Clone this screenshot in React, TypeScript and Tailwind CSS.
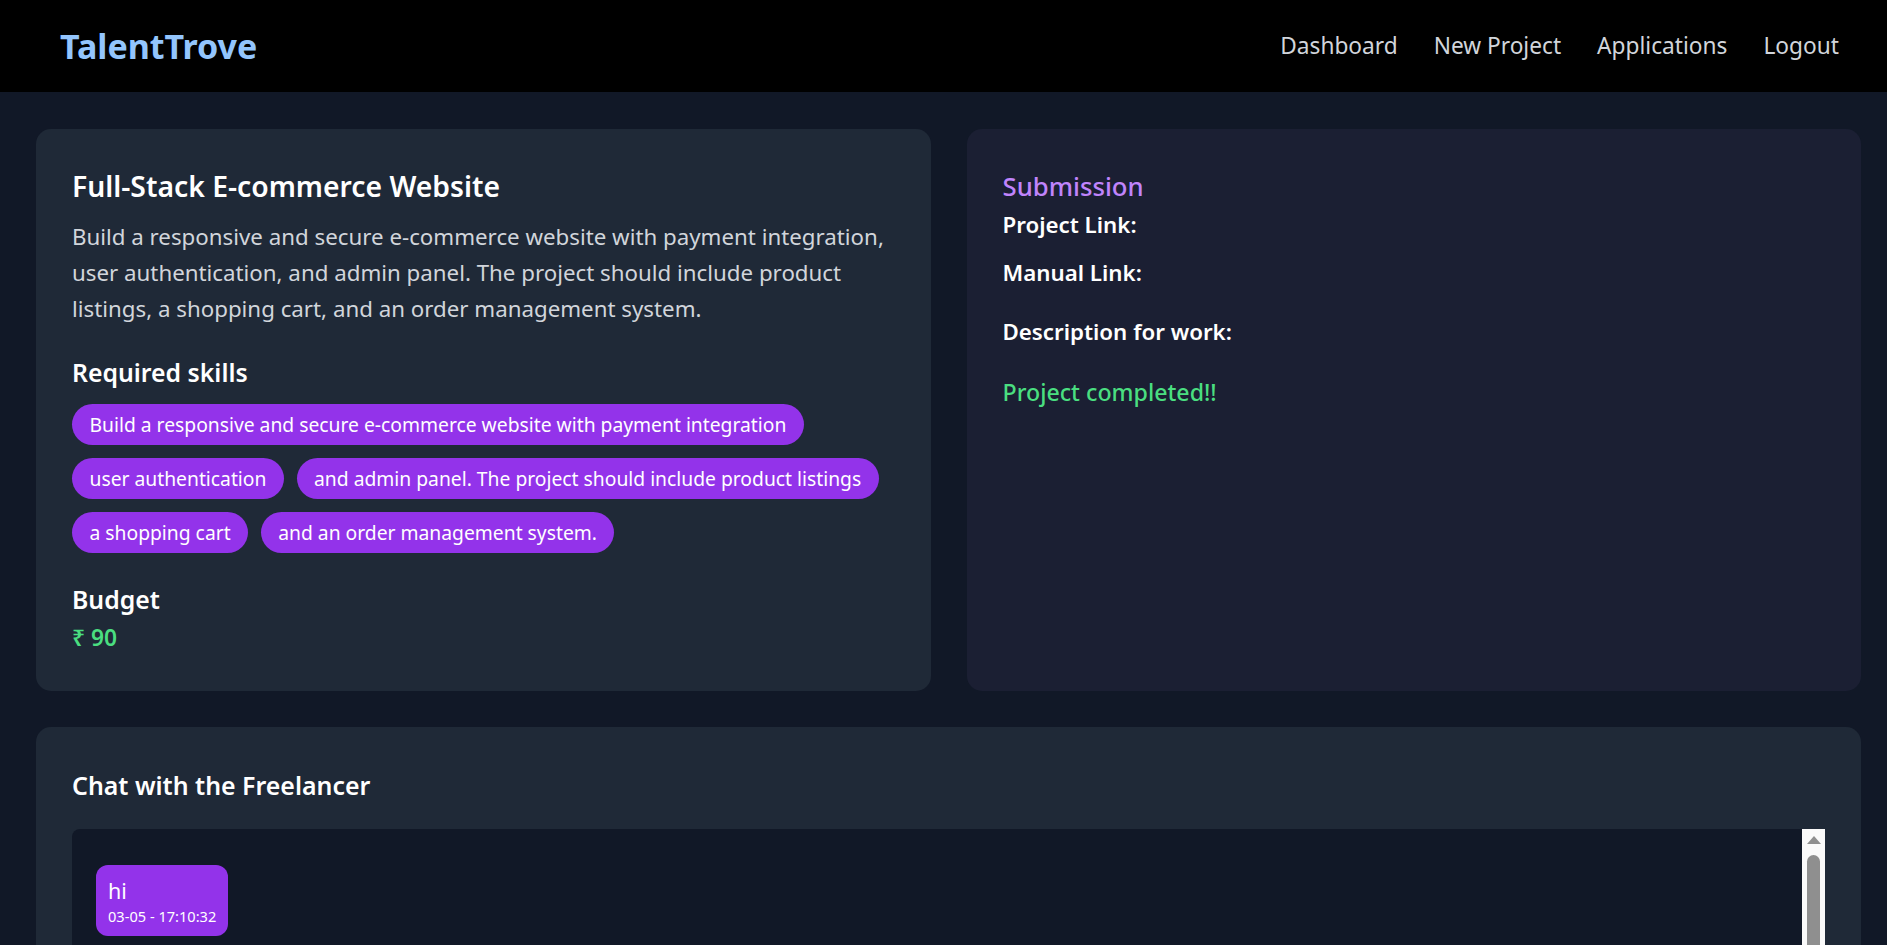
import React from 'react';

const navLinks = ['Dashboard', 'New Project', 'Applications', 'Logout'];

const skills = [
  'Build a responsive and secure e-commerce website with payment integration',
  'user authentication',
  'and admin panel. The project should include product listings',
  'a shopping cart',
  'and an order management system.',
];

const messages = [{ text: 'hi', time: '03-05 - 17:10:32' }];

export default function App() {
  return (
    <div className="h-[945px] overflow-hidden bg-[#111827] font-['Noto_Sans',sans-serif] text-white">
      {/* Navbar */}
      <header className="flex h-[92px] items-center justify-between bg-black pl-[60px] pr-[48px]">
        <h1 className="text-[34px] font-bold leading-none text-[#93c5fd]">TalentTrove</h1>
        <nav className="flex items-center gap-[36px] text-[22.7px] text-[#d1d5db]">
          {navLinks.map((l) => (
            <a key={l} className="cursor-pointer hover:text-white">
              {l}
            </a>
          ))}
        </nav>
      </header>

      <main className="flex flex-col gap-[36px] pl-[36px] pr-[26px] pt-[37px]">
        <div className="grid grid-cols-2 gap-[36px]">
          {/* Project details */}
          <section className="rounded-[15px] bg-[#1f2937] px-[36px] pb-[35px] pt-[36px]">
            <h2 className="text-[28.3px] font-semibold leading-[43px]">Full-Stack E-commerce Website</h2>
            <p className="mt-[11px] text-[22.3px] leading-[36px] text-[#d1d5db]">
              Build a responsive and secure e-commerce website with payment integration, user authentication, and
              admin panel. The project should include product listings, a shopping cart, and an order management
              system.
            </p>

            <h3 className="mt-[27px] text-[24.8px] font-semibold leading-[36px]">Required skills</h3>
            <div className="mt-[14px] flex flex-wrap gap-[12.6px]">
              {skills.map((s) => (
                <span
                  key={s}
                  className="flex h-[41.4px] items-center whitespace-nowrap rounded-full bg-[#9333ea] px-[17.5px] text-[19.3px] leading-none"
                >
                  {s}
                </span>
              ))}
            </div>

            <h3 className="mt-[28px] text-[24.8px] font-semibold leading-[36px]">Budget</h3>
            <p className="mt-[3px] text-[22.8px] font-semibold leading-[36px] text-[#4ade80]">₹ 90</p>
          </section>

          {/* Submission */}
          <section className="rounded-[15px] bg-[#1b1f33] px-[36px] pt-[36px]">
            <h2 className="text-[25.7px] font-medium leading-[43px] text-[#c084fc]">Submission</h2>
            <p className="text-[22.3px] font-semibold leading-[34px]">Project Link:</p>
            <p className="mt-[14px] text-[22.3px] font-semibold leading-[34px]">Manual Link:</p>
            <p className="mt-[25px] text-[22.3px] font-semibold leading-[34px]">Description for work:</p>
            <p className="mt-[26px] text-[23.2px] font-medium leading-[34px] text-[#4ade80]">Project completed!!</p>
          </section>
        </div>

        {/* Chat */}
        <section className="rounded-[15px] bg-[#1f2937] px-[36px] pt-[36px]">
          <h2 className="text-[24.9px] font-semibold leading-[44px]">Chat with the Freelancer</h2>
          <div className="mt-[22px] flex h-[400px] overflow-hidden rounded-tl-[8px] bg-[#111827]">
            <div className="flex flex-1 flex-col items-start gap-3 pl-[24px] pt-[36px]">
              {messages.map((m, i) => (
                <div key={i} className="rounded-[12px] bg-[#9333ea] px-[12px] pb-[9px] pt-[10px]">
                  <p className="text-[21.5px] leading-[31px]">{m.text}</p>
                  <p className="text-[14.6px] leading-[21px]">{m.time}</p>
                </div>
              ))}
            </div>
            {/* scrollbar */}
            <div className="flex w-[23px] flex-col items-center bg-[#fafafa] pt-[7px]">
              <div className="h-0 w-0 border-x-[7px] border-b-[8px] border-x-transparent border-b-[#8f8f8f]" />
              <div className="mt-[11px] h-[300px] w-[13px] rounded-full bg-[#8f8f8f]" />
            </div>
          </div>
        </section>
      </main>
    </div>
  );
}
